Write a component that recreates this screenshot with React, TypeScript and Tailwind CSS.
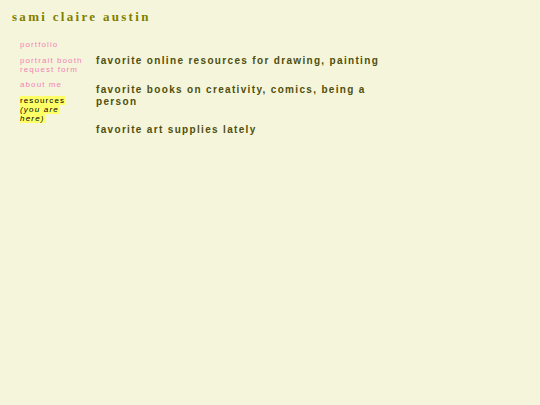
const navItems = [
  { label: 'portfolio' },
  { label: 'portrait booth request form' },
  { label: 'about me' },
];

const resources = [
  'favorite online resources for drawing, painting',
  'favorite books on creativity, comics, being a person',
  'favorite art supplies lately',
];

export default function App() {
  return (
    <div className="min-h-[405px] w-full bg-[#f5f5dc] font-['Liberation_Sans',Arial,sans-serif]">
      <h1 className="px-3 pt-[9px] font-['Liberation_Serif','Times_New_Roman',serif] text-[13px] font-bold leading-[16px] tracking-[2.3px] text-[#808000]">
        sami claire austin
      </h1>

      <div className="flex pt-[15px]">
        <nav className="ml-5 w-[64px] shrink-0 text-[8px] leading-[9px] tracking-[1.1px]">
          {navItems.map((item) => (
            <p key={item.label} className="mb-[6.5px] text-[#f284b4]">
              {item.label}
            </p>
          ))}
          <p className="text-black">
            <span className="bg-[#ffff66]">
              resources <i className="tracking-[1.2px]">(you are here)</i>
            </span>
          </p>
        </nav>

        <main className="ml-[12px] w-[300px] pt-[15px]">
          {resources.map((r) => (
            <h2
              key={r}
              className="mb-[16.5px] text-[10px] font-bold leading-[12px] tracking-[1.33px] text-[#4f4f0c]"
            >
              {r}
            </h2>
          ))}
        </main>
      </div>
    </div>
  );
}
